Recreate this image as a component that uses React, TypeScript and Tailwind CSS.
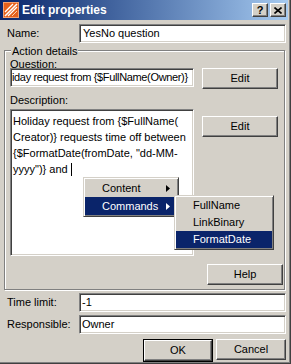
import React from 'react';

// Win2k classic 3D edges
const sunken =
  'bg-white border border-t-[#808080] border-l-[#808080] border-b-white border-r-white shadow-[inset_1px_1px_0_#404040,inset_-1px_-1px_0_#d4d0c8]';
const raised =
  'bg-[#d4d0c8] border border-t-white border-l-white border-b-[#404040] border-r-[#404040] shadow-[inset_-1px_-1px_0_#808080]';
const menuBox =
  'bg-[#d4d0c8] border border-t-[#d4d0c8] border-l-[#d4d0c8] border-b-[#404040] border-r-[#404040] shadow-[inset_1px_1px_0_#fff,inset_-1px_-1px_0_#808080] p-[1px]';

function Button({ label, className = '' }: { label: string; className?: string }) {
  return (
    <div className={`${raised} h-[21px] flex items-center justify-center leading-none ${className}`}>
      {label}
    </div>
  );
}

function Arrow({ white = false }: { white?: boolean }) {
  return (
    <svg width="4" height="7" viewBox="0 0 4 7" className="ml-auto mr-[7px]">
      <polygon points="0,0 4,3.5 0,7" fill={white ? '#fff' : '#000'} />
    </svg>
  );
}

function AppIcon() {
  return (
    <svg width="16" height="16" viewBox="0 0 16 16">
      <rect x="0" y="0" width="16" height="16" fill="#e5601c" />
      <rect x="0.5" y="0.5" width="15" height="15" fill="none" stroke="#f4a070" />
      <path d="M2 14 L14 2" stroke="#fff" strokeWidth="1.6" />
      <path d="M5 14 L14 5" stroke="#fff" strokeWidth="1.2" />
      <path d="M2 10 L10 2" stroke="#fff" strokeWidth="1.2" />
      <path d="M9 14 L14 9" stroke="#fbd0b0" strokeWidth="1" />
    </svg>
  );
}

export default function App() {
  return (
    <div className="w-[291px] h-[364px] bg-[#d4d0c8] border-r border-b border-r-[#404040] border-b-[#404040] shadow-[inset_-1px_-1px_0_#808080] font-['Liberation_Sans',Arial,sans-serif] text-[11px] text-black overflow-hidden relative">
      {/* Title bar */}
      <div className="h-[20px] mr-[2px] bg-gradient-to-r from-[#0a246a] to-[#a6caf0] flex items-center pl-[3px] pr-[2px]">
        <AppIcon />
        <span className="ml-[3px] text-white font-bold text-[12px]">Edit properties</span>
        <div className="ml-auto flex gap-[2px]">
          <div className={`${raised} w-[16px] h-[14px] flex items-center justify-center font-bold text-[11px] leading-none`}>?</div>
          <div className={`${raised} w-[16px] h-[14px] flex items-center justify-center`}>
            <svg width="8" height="7" viewBox="0 0 8 7">
              <path d="M0.5 0.5 L7.5 6.5 M7.5 0.5 L0.5 6.5" stroke="#000" strokeWidth="1.6" />
            </svg>
          </div>
        </div>
      </div>

      <div className="pl-[4px] pr-[4px]">
        {/* Name */}
        <div className="mt-[4px] flex items-center">
          <span className="w-[75px] pl-[3px]">Name:</span>
          <div className={`${sunken} flex-1 h-[19px] flex items-center pl-[3px]`}>YesNo question</div>
        </div>

        {/* Action details group */}
        <div className="relative mt-[7px] border border-[#808080] shadow-[1px_1px_0_#fff,inset_1px_1px_0_#fff] mr-[1px] pb-[4px]">
          <span className="absolute -top-[6px] left-[6px] bg-[#d4d0c8] px-[1px] leading-[13px]">Action details</span>
          <div className="mt-[9px] pl-[5px] leading-[8px] h-[8px]">Question:</div>
          <div className="flex items-start">
            <div className={`${sunken} ml-[5px] w-[184px] h-[19px] flex items-center pl-[1px] overflow-hidden whitespace-nowrap tracking-[-0.35px]`}>
              iday request from {'{'}$FullName(Owner){'}'}
            </div>
            <Button label="Edit" className="ml-[8px] w-[76px]" />
          </div>
          <div className="mt-[6px] pl-[5px] leading-[10px] h-[10px]">Description:</div>
          <div className="mt-[4px] flex items-start">
            <div className={`${sunken} ml-[5px] w-[184px] h-[147px] pl-[2px] pt-[3px] leading-[16px] whitespace-nowrap overflow-hidden`}>
              <div>Holiday request from {'{'}$FullName(</div>
              <div>Creator){'}'} requests time off between</div>
              <div>{'{'}$FormatDate(fromDate, "dd-MM-</div>
              <div className="flex items-center">
                yyyy"){'}'} and<span className="ml-[3px] inline-block w-[1px] h-[13px] bg-black" />
              </div>
            </div>
            <Button label="Edit" className="ml-[8px] mt-[7px] w-[76px]" />
          </div>
          <div className="mt-[8px] flex justify-end">
            <Button label="Help" className="w-[76px] mr-[1px]" />
          </div>
        </div>

        {/* Time limit / Responsible */}
        <div className="mt-[3px] flex items-center">
          <span className="w-[75px] pl-[3px]">Time limit:</span>
          <div className={`${sunken} flex-1 h-[19px] flex items-center pl-[2px]`}>-1</div>
        </div>
        <div className="mt-[3px] flex items-center">
          <span className="w-[75px] pl-[3px]">Responsible:</span>
          <div className={`${sunken} flex-1 h-[19px] flex items-center pl-[2px]`}>Owner</div>
        </div>

        <div className="mt-[5px] flex justify-end gap-[3px]">
          <div className="border border-black">
            <Button label="OK" className="w-[68px] h-[19px]" />
          </div>
          <Button label="Cancel" className="w-[70px]" />
        </div>
      </div>

      {/* Context menu */}
      <div className={`${menuBox} absolute left-[83px] top-[177px] w-[96px]`}>
        <div className="h-[18px] flex items-center pl-[17px]">
          Content
          <Arrow />
        </div>
        <div className="h-[18px] flex items-center pl-[17px] bg-[#0a246a] text-white">
          Commands
          <Arrow white />
        </div>
      </div>
      <div className={`${menuBox} absolute left-[174px] top-[195px] w-[100px]`}>
        <div className="h-[17px] flex items-center pl-[17px]">FullName</div>
        <div className="h-[17px] flex items-center pl-[17px]">LinkBinary</div>
        <div className="h-[17px] flex items-center pl-[17px] bg-[#0a246a] text-white">FormatDate</div>
      </div>
    </div>
  );
}
